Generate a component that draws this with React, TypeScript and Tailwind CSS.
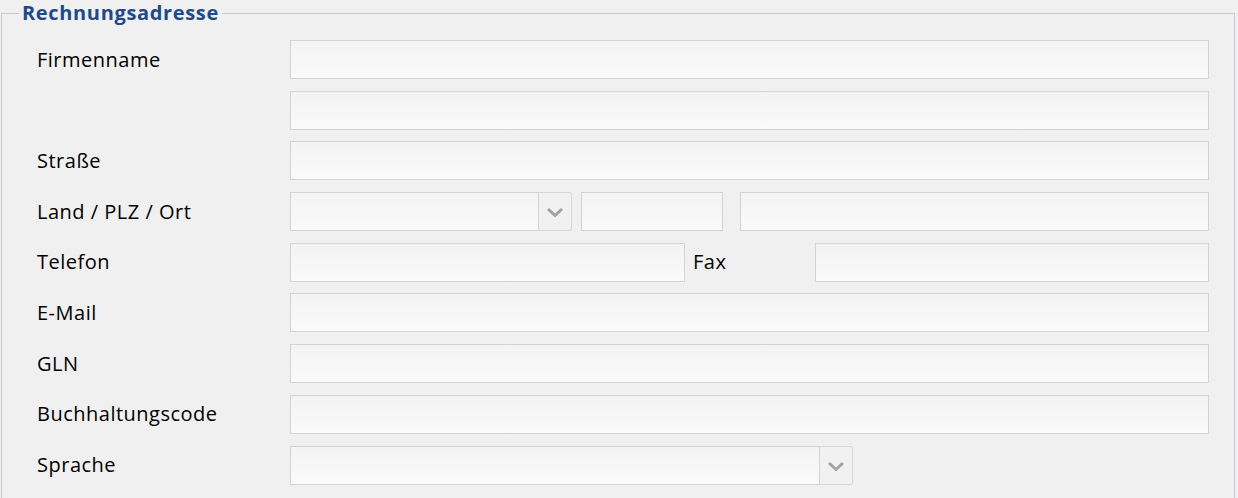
import React from "react";

const font = "font-['Open_Sans',sans-serif]";

function Input({ className = "" }: { className?: string }) {
  return (
    <div
      className={`h-[39px] border border-[#d3d3d3] bg-gradient-to-b from-[#f3f3f3] to-[#fafafa] ${className}`}
    />
  );
}

function Select({ className = "" }: { className?: string }) {
  return (
    <div className={`flex h-[39px] ${className}`}>
      <div className="flex-1 border border-[#d3d3d3] bg-gradient-to-b from-[#f3f3f3] to-[#fafafa]" />
      <div className="flex w-[33px] items-center justify-center rounded-r-[3px] border border-l-0 border-[#d8d8d8] bg-[#f1f1f1]">
        <svg width="18" height="11" viewBox="0 0 18 11" fill="none" className="mt-[2px]">
          <path d="M2 2l7 6.5 7-6.5" stroke="#a2a2a2" strokeWidth="3" />
        </svg>
      </div>
    </div>
  );
}

function Label({ children }: { children: React.ReactNode }) {
  return (
    <div className="flex h-[39px] items-center pl-[35px] text-[20px] tracking-[0.5px] text-black">
      {children}
    </div>
  );
}

export default function App() {
  return (
    <div className={`h-[498px] w-[1238px] overflow-hidden bg-[#f0f0f0] ${font}`}>
      <fieldset className="ml-[1px] mt-[3px] w-[1234px] border border-[#c9c9d3] pb-6">
        <legend className="ml-[17px] px-[3px] text-[20px] font-bold leading-[20px] tracking-[0.65px] text-[#1e4a8c]">
          Rechnungsadresse
        </legend>
        <div className="mt-[17px] grid grid-cols-[288px_1fr] gap-y-[11.7px] pr-[25px]">
          <Label>Firmenname</Label>
          <Input />

          <div />
          <Input />

          <Label>Straße</Label>
          <Input />

          <Label>Land / PLZ / Ort</Label>
          <div className="flex">
            <Select className="w-[282px]" />
            <Input className="ml-[9px] w-[142px]" />
            <Input className="ml-[17px] flex-1" />
          </div>

          <Label>Telefon</Label>
          <div className="flex">
            <Input className="w-[395px]" />
            <div className="flex h-[39px] w-[130px] items-center pl-[8px] text-[20px] tracking-[0.5px] text-black">
              Fax
            </div>
            <Input className="flex-1" />
          </div>

          <Label>E-Mail</Label>
          <Input />

          <Label>GLN</Label>
          <Input />

          <Label>Buchhaltungscode</Label>
          <Input />

          <Label>Sprache</Label>
          <div className="flex">
            <Select className="w-[563px]" />
          </div>
        </div>
      </fieldset>
    </div>
  );
}
